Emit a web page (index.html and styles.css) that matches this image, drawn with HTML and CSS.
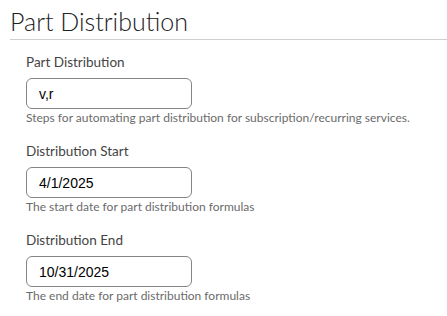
FILE: index.html
```html
<!DOCTYPE html>
<html lang="en">
<head>
    <meta charset="UTF-8">
    <meta name="viewport" content="width=device-width, initial-scale=1.0">
    <title>Part Distribution</title>
    <link rel="stylesheet" href="styles.css">
</head>
<body>
    <div class="header">
        <h1>Part Distribution</h1>
    </div>

    <form class="settings">
        <div class="field">
            <label for="partDistribution">Part Distribution</label>
            <input type="text" id="partDistribution" value="v,r">
            <div class="help">Steps for automating part distribution for subscription/recurring services.</div>
        </div>

        <div class="field">
            <label for="distStart">Distribution Start</label>
            <input type="text" id="distStart" value="4/1/2025">
            <div class="help">The start date for part distribution formulas</div>
        </div>

        <div class="field">
            <label for="distEnd">Distribution End</label>
            <input type="text" id="distEnd" value="10/31/2025">
            <div class="help">The end date for part distribution formulas</div>
        </div>
    </form>
</body>
</html>
```

FILE: styles.css
```css
body {
    margin: 0;
    font-family: "Lato", "Liberation Sans", sans-serif;
    background-color: #fff;
    color: #333;
}
.header {
    margin-left: 10px;
    border-bottom: 1px solid #cfcfcf;
}
h1 {
    margin: 0;
    padding: 7px 0 4px 0;
    font-size: 25px;
    line-height: 28px;
    font-weight: 300;
    color: #222;
}
.settings {
    padding: 14px 0 0 26px;
}
.field {
    margin-bottom: 18px;
}
label {
    display: block;
    font-size: 13.5px;
    line-height: 16px;
    margin-bottom: 8px;
    color: #444;
}
input[type="text"] {
    display: block;
    width: 166px;
    height: 31px;
    padding: 0 12px;
    border: 1px solid #858585;
    border-radius: 6px;
    box-sizing: border-box;
    font-family: "Liberation Sans", Arial, sans-serif;
    font-size: 14px;
    color: #000;
}
.help {
    margin-top: 2px;
    font-size: 12px;
    line-height: 14px;
    color: #6b6b6b;
}
```
